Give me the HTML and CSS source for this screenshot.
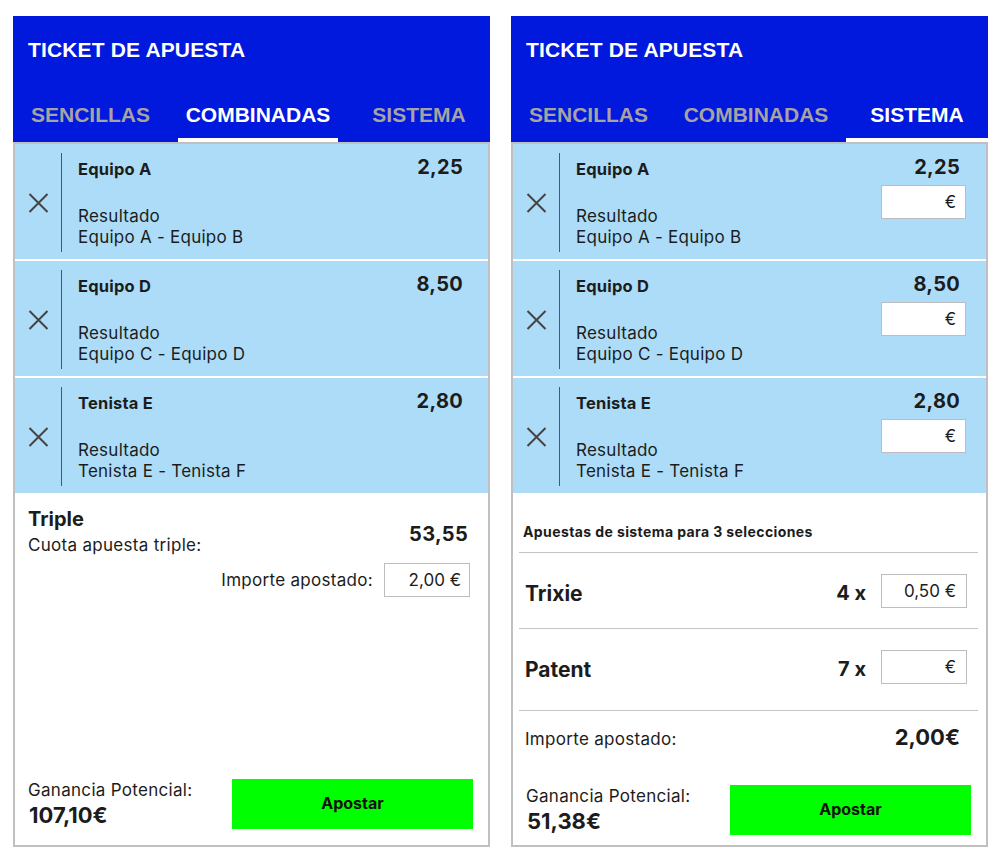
FILE: index.html
```html
<!DOCTYPE html>
<html lang="es">
<head>
<meta charset="utf-8">
<title>Ticket de apuesta</title>
<link rel="stylesheet" href="styles.css">
</head>
<body>
<div class="page">
  <section class="ticket">
    <header class="ticket-head">
      <h1 class="ticket-title">TICKET DE APUESTA</h1>
      <nav class="tabs">
        <span class="tab">SENCILLAS</span>
        <span class="tab tab-active">COMBINADAS</span>
        <span class="tab">SISTEMA</span>
      </nav>
    </header>
    <div class="ticket-body">
      <div class="sel">
        <div class="sel-remove"><svg class="x-icon" width="21" height="20" viewBox="0 0 21 20"><path d="M1.5 1L19.5 19M19.5 1L1.5 19"/></svg></div>
        <div class="sel-main">
          <div class="sel-info">
            <div class="sel-name">Equipo A</div>
            <div class="sel-desc">Resultado<br>Equipo A - Equipo B</div>
          </div>
          <div class="sel-side"><div class="sel-odds">2,25</div></div>
        </div>
      </div>
      <div class="sel">
        <div class="sel-remove"><svg class="x-icon" width="21" height="20" viewBox="0 0 21 20"><path d="M1.5 1L19.5 19M19.5 1L1.5 19"/></svg></div>
        <div class="sel-main">
          <div class="sel-info">
            <div class="sel-name">Equipo D</div>
            <div class="sel-desc">Resultado<br>Equipo C - Equipo D</div>
          </div>
          <div class="sel-side"><div class="sel-odds">8,50</div></div>
        </div>
      </div>
      <div class="sel">
        <div class="sel-remove"><svg class="x-icon" width="21" height="20" viewBox="0 0 21 20"><path d="M1.5 1L19.5 19M19.5 1L1.5 19"/></svg></div>
        <div class="sel-main">
          <div class="sel-info">
            <div class="sel-name">Tenista E</div>
            <div class="sel-desc">Resultado<br>Tenista E - Tenista F</div>
          </div>
          <div class="sel-side"><div class="sel-odds">2,80</div></div>
        </div>
      </div>

      <div class="combo">
        <div class="combo-head">
          <div>
            <div class="combo-type">Triple</div>
            <div class="combo-label">Cuota apuesta triple:</div>
          </div>
          <div class="combo-odds">53,55</div>
        </div>
        <div class="combo-stake">
          <span class="combo-stake-label">Importe apostado:</span>
          <div class="stake-box stake-box--combo">2,00 €</div>
        </div>
      </div>

      <div class="footer">
        <div class="gain">
          <div class="gain-label">Ganancia Potencial:</div>
          <div class="gain-value">107,10€</div>
        </div>
        <button class="bet-btn">Apostar</button>
      </div>
    </div>
  </section>

  <section class="ticket ticket--system">
    <header class="ticket-head">
      <h1 class="ticket-title">TICKET DE APUESTA</h1>
      <nav class="tabs">
        <span class="tab">SENCILLAS</span>
        <span class="tab">COMBINADAS</span>
        <span class="tab tab-active">SISTEMA</span>
      </nav>
    </header>
    <div class="ticket-body">
      <div class="sel">
        <div class="sel-remove"><svg class="x-icon" width="21" height="20" viewBox="0 0 21 20"><path d="M1.5 1L19.5 19M19.5 1L1.5 19"/></svg></div>
        <div class="sel-main">
          <div class="sel-info">
            <div class="sel-name">Equipo A</div>
            <div class="sel-desc">Resultado<br>Equipo A - Equipo B</div>
          </div>
          <div class="sel-side">
            <div class="sel-odds">2,25</div>
            <div class="stake-box">€</div>
          </div>
        </div>
      </div>
      <div class="sel">
        <div class="sel-remove"><svg class="x-icon" width="21" height="20" viewBox="0 0 21 20"><path d="M1.5 1L19.5 19M19.5 1L1.5 19"/></svg></div>
        <div class="sel-main">
          <div class="sel-info">
            <div class="sel-name">Equipo D</div>
            <div class="sel-desc">Resultado<br>Equipo C - Equipo D</div>
          </div>
          <div class="sel-side">
            <div class="sel-odds">8,50</div>
            <div class="stake-box">€</div>
          </div>
        </div>
      </div>
      <div class="sel">
        <div class="sel-remove"><svg class="x-icon" width="21" height="20" viewBox="0 0 21 20"><path d="M1.5 1L19.5 19M19.5 1L1.5 19"/></svg></div>
        <div class="sel-main">
          <div class="sel-info">
            <div class="sel-name">Tenista E</div>
            <div class="sel-desc">Resultado<br>Tenista E - Tenista F</div>
          </div>
          <div class="sel-side">
            <div class="sel-odds">2,80</div>
            <div class="stake-box">€</div>
          </div>
        </div>
      </div>

      <div class="sys">
        <div class="sys-title">Apuestas de sistema para 3 selecciones</div>
        <div class="sys-row">
          <span class="sys-name">Trixie</span>
          <span class="sys-count">4 x</span>
          <div class="stake-box stake-box--sys">0,50 €</div>
        </div>
        <div class="sys-row sys-row--last">
          <span class="sys-name">Patent</span>
          <span class="sys-count">7 x</span>
          <div class="stake-box stake-box--sys">€</div>
        </div>
        <div class="sys-total">
          <span class="sys-total-label">Importe apostado:</span>
          <span class="sys-total-value">2,00€</span>
        </div>
      </div>

      <div class="footer">
        <div class="gain">
          <div class="gain-label">Ganancia Potencial:</div>
          <div class="gain-value">51,38€</div>
        </div>
        <button class="bet-btn">Apostar</button>
      </div>
    </div>
  </section>
</div>
</body>
</html>
```

FILE: styles.css
```css
* { box-sizing: border-box; }

body {
  margin: 0;
  background: #ffffff;
  color: #1c1c1c;
  font-family: Inter, "Noto Sans", sans-serif;
}

.page {
  display: flex;
  gap: 21px;
  padding: 16px 0 0 13px;
}

.ticket {
  width: 477px;
  height: 831px;
  display: flex;
  flex-direction: column;
}

.ticket-head {
  background: #0019dc;
}

.ticket-title {
  margin: 22px 0 0 15px;
  font: 700 21px/24px "Liberation Sans", Arial, sans-serif;
  letter-spacing: 0.15px;
  color: #ffffff;
}

.tabs {
  display: grid;
  grid-template-columns: 155px 160px 142px;
  column-gap: 10px;
  margin-top: 41px;
}

.tab {
  font: 700 21px/24px "Liberation Sans", Arial, sans-serif;
  color: #a8a3a3;
  text-align: center;
  padding-bottom: 11px;
  border-bottom: 4px solid transparent;
}

.tab-active {
  color: #ffffff;
  border-bottom-color: #ffffff;
}

.ticket-body {
  flex: 1;
  display: flex;
  flex-direction: column;
  border: 2px solid #c0c0c0;
}

/* selections */
.sel {
  display: flex;
  background: #addcf8;
  padding: 9px 25px 7px 0;
}

.sel + .sel {
  border-top: 2px solid #ffffff;
}

.sel-remove {
  width: 46px;
  display: flex;
  align-items: center;
  justify-content: center;
}

.x-icon path {
  fill: none;
  stroke: #444444;
  stroke-width: 2;
}

.sel-main {
  flex: 1;
  height: 99px;
  display: flex;
  justify-content: space-between;
  border-left: 1px solid #555555;
  padding-left: 16px;
}

.sel-name {
  margin-top: 6px;
  font-weight: 700;
  font-size: 16.5px;
  line-height: 20px;
  letter-spacing: 0.2px;
}

.sel-desc {
  margin-top: 27px;
  font-size: 17px;
  line-height: 21px;
  letter-spacing: 0.25px;
}

.sel-side {
  display: flex;
  flex-direction: column;
  align-items: flex-end;
}

.sel-odds {
  margin-top: 2px;
  font-weight: 700;
  font-size: 20px;
  line-height: 24px;
  letter-spacing: 0.3px;
}

.ticket--system .sel {
  padding-right: 20px;
}

.ticket--system .sel-odds {
  margin-right: 6px;
}

.stake-box {
  width: 85px;
  height: 34px;
  margin-top: 6px;
  display: flex;
  align-items: center;
  justify-content: flex-end;
  padding-right: 9px;
  background: #ffffff;
  border: 1px solid #bdbdbd;
  font-size: 17px;
}

.stake-box--combo {
  width: 86px;
  margin-top: 0;
  padding-right: 8px;
}

.stake-box--sys {
  width: 86px;
  margin-top: 0;
  padding-right: 10px;
}

/* combined */
.combo {
  padding: 14px 18px 0 13px;
}

.combo-head {
  display: flex;
  justify-content: space-between;
  align-items: center;
}

.combo-type {
  font-weight: 700;
  font-size: 20px;
  line-height: 24px;
}

.combo-label {
  margin-top: 4px;
  font-size: 17px;
  line-height: 21px;
  letter-spacing: 0.3px;
}

.combo-odds {
  margin: 4px 2px 0 0;
  font-weight: 700;
  font-size: 20px;
  line-height: 24px;
  letter-spacing: 0.3px;
}

.combo-stake {
  display: flex;
  justify-content: flex-end;
  align-items: center;
  gap: 11px;
  margin-top: 7px;
}

.combo-stake-label {
  font-size: 17px;
  line-height: 21px;
  letter-spacing: 0.3px;
}

/* system */
.sys {
  padding: 30px 8px 0 6px;
}

.sys-title {
  padding: 0 0 12px 4px;
  border-bottom: 1px solid #c4c4c4;
  font-weight: 700;
  font-size: 14px;
  line-height: 17px;
  letter-spacing: 0.4px;
}

.sys-row {
  display: flex;
  align-items: center;
  padding: 21px 11px 20px 6px;
  border-bottom: 1px solid #c4c4c4;
}

.sys-row--last {
  padding-bottom: 26px;
}

.sys-name {
  flex: 1;
  margin-top: 5px;
  font-weight: 700;
  font-size: 21px;
  line-height: 26px;
}

.sys-count {
  margin: 3px 15px 0 0;
  font-weight: 700;
  font-size: 20px;
  line-height: 24px;
}

.sys-total {
  display: flex;
  justify-content: space-between;
  align-items: baseline;
  padding: 13px 18px 0 6px;
}

.sys-total-label {
  font-size: 17px;
  line-height: 21px;
  letter-spacing: 0.3px;
}

.sys-total-value {
  font-weight: 700;
  font-size: 22px;
  line-height: 27px;
}

/* footer */
.footer {
  margin-top: auto;
  display: flex;
  align-items: center;
  justify-content: space-between;
  padding: 0 15px 16px 13px;
}

.ticket--system .footer {
  padding-bottom: 10px;
}

.gain-label {
  font-size: 17px;
  line-height: 21px;
  letter-spacing: 0.3px;
}

.gain-value {
  margin-left: 1px;
  font-weight: 700;
  font-size: 22px;
  line-height: 28px;
}

.bet-btn {
  width: 241px;
  height: 50px;
  border: none;
  background: #00ff00;
  color: #111111;
  font-family: Inter, "Noto Sans", sans-serif;
  font-weight: 700;
  font-size: 16px;
  padding: 0 0 2px;
}
```
